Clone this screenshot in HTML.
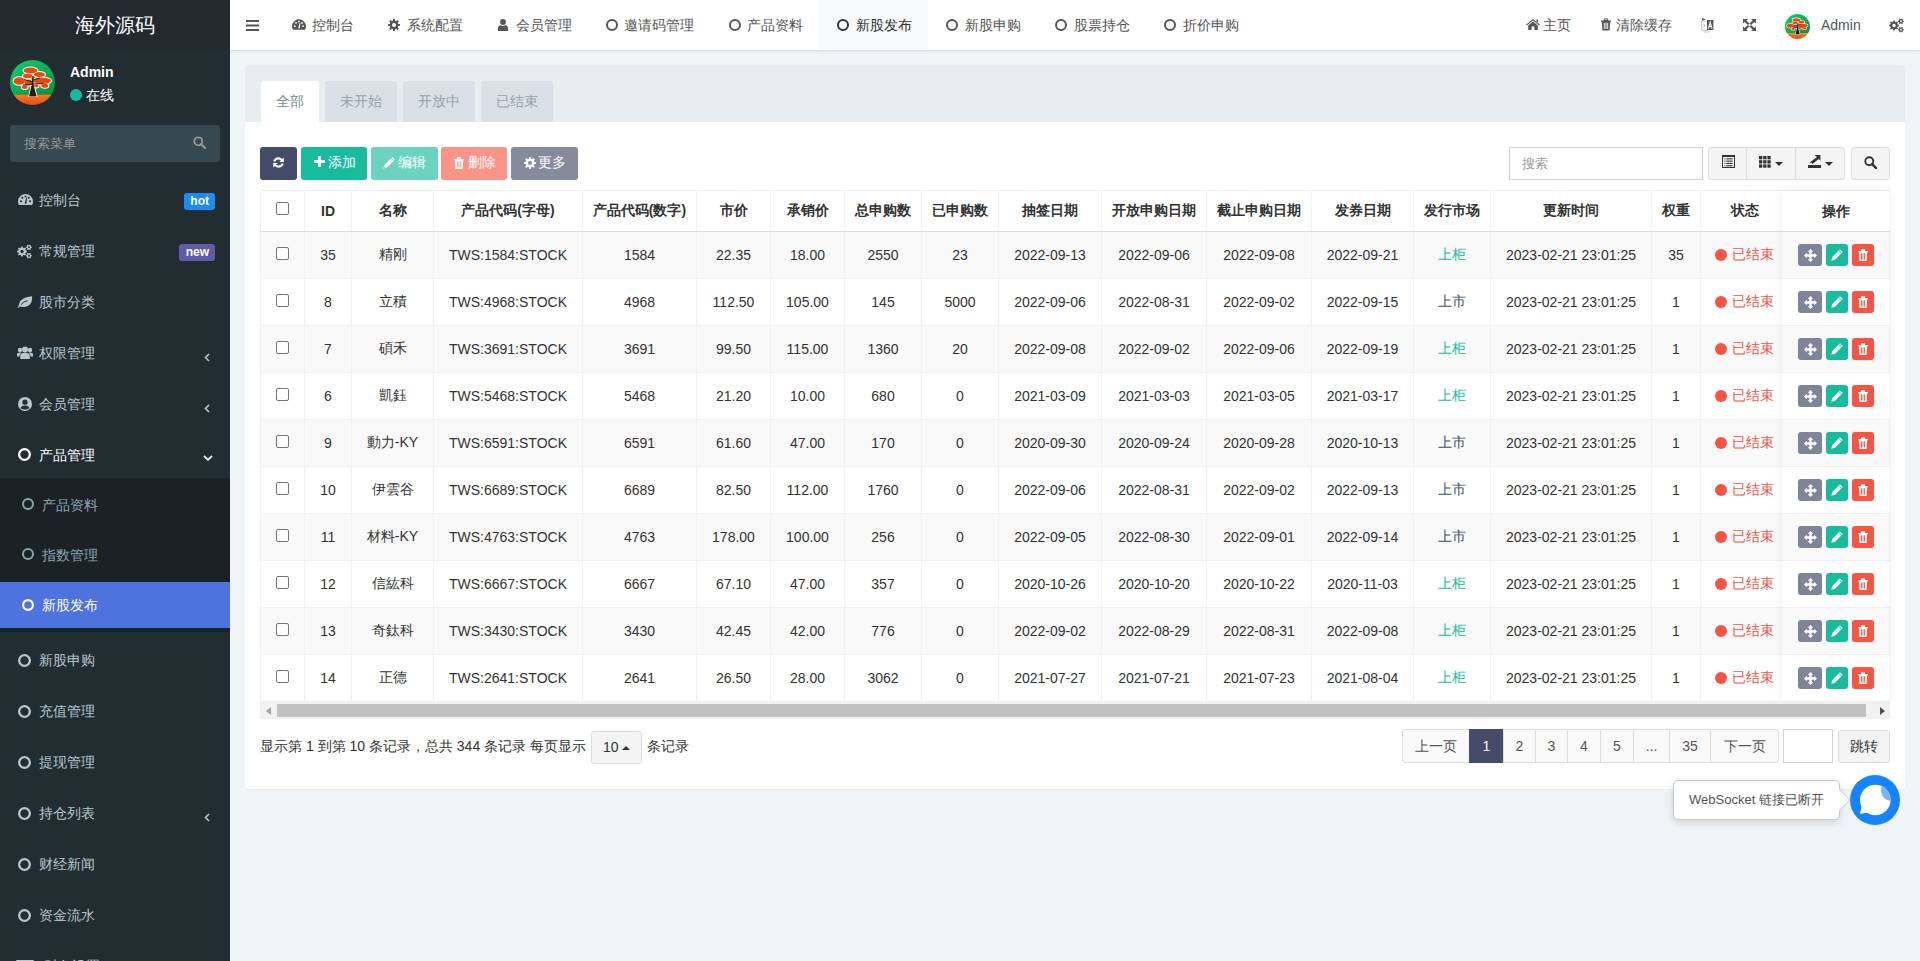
<!DOCTYPE html>
<html><head><meta charset="utf-8">
<style>
*{box-sizing:border-box}
html,body{margin:0;padding:0}
body{width:1920px;height:961px;overflow:hidden;position:relative;background:#f1f4f6;font-family:"Liberation Sans",sans-serif;font-size:14px;color:#333}
.abs{position:absolute}
svg{display:block}
/* sidebar */
#side{position:absolute;left:0;top:0;width:230px;height:961px;background:#222d32;overflow:hidden}
#logo{position:absolute;left:0;top:0;width:230px;height:50px;background:#222a30;color:#fff;font-size:20px;text-align:center;line-height:50px}
.avatar{position:absolute;left:10px;top:60px;width:45px;height:45px;border-radius:50%;overflow:hidden}
.uname{position:absolute;left:70px;top:63px;color:#fff;font-weight:bold;font-size:14px;line-height:18px}
.online{position:absolute;left:70px;top:86px;color:#fff;font-size:14px;line-height:18px}
.online i{display:inline-block;width:12px;height:12px;border-radius:50%;background:#18bc9c;vertical-align:-1px;margin-right:4px}
.sform{position:absolute;left:10px;top:125px;width:210px;height:37px;background:#374850;border-radius:3px}
.sform span{position:absolute;left:14px;top:10px;color:#999;font-size:13px;line-height:18px}
.sform svg{position:absolute;left:183px;top:11px}
.mi{position:absolute;left:0;width:230px;height:51px;color:#b8c7ce;font-size:14px}
.mi .ic{position:absolute;left:17px;top:19px}
.mi .tx{position:absolute;left:39px;top:16px;line-height:18px}
.mi .ang{position:absolute;left:204px;top:21px}
.badge{position:absolute;right:15px;top:18px;height:17px;line-height:17px;padding:0 6px;border-radius:3px;color:#fff;font-weight:bold;font-size:12px}
.sub{position:absolute;left:0;top:478px;width:230px;height:154px;background:#1a2226}
.si{position:absolute;left:0;width:230px;height:50px;color:#8aa4af}
.si .ic{position:absolute;left:22px;top:18px}
.si .tx{position:absolute;left:42px;top:16px;line-height:18px}
.si.act{background:#4e73df;color:#fff;height:46px}
/* header */
#hdr{position:absolute;left:230px;top:0;width:1690px;height:50px;background:#fff;box-shadow:0 1px 1px rgba(0,20,40,.05),0 1px 4px rgba(0,20,40,.07)}
.nt{position:absolute;top:0;height:50px;color:#555;font-size:14px}
.nt .ic{position:absolute;top:18px}
.nt .tx{position:absolute;top:16px;line-height:18px;white-space:nowrap}
/* content */
.panel{position:absolute;left:245px;top:65px;width:1660px;height:724px;background:#fff;border-radius:3px;box-shadow:0 1px 1px rgba(0,0,0,.03)}
.ph{position:absolute;left:0;top:0;width:1660px;height:57px;background:#e8edf0;border-radius:3px 3px 0 0}
.tab{position:absolute;top:16px;height:41px;background:#d9e0e6;color:#95a5a6;border-radius:3px 3px 0 0;line-height:18px;padding-top:11px;text-align:center}
.tab.act{background:#fff;color:#7b8a8b}
.btn{position:absolute;top:82px;height:33px;border-radius:3px;color:#fff;font-size:14px;line-height:18px}
.btn .ic{position:absolute;top:10px}
.btn .tx{position:absolute;top:6px;white-space:nowrap}
.srch{position:absolute;left:1264px;top:82px;width:194px;height:33px;border:1px solid #ccd5df;background:#fff}
.srch span{position:absolute;left:12px;top:7px;color:#999;line-height:18px;font-size:13px}
.bg{position:absolute;top:82px;height:33px;background:#f4f4f4;border:1px solid #ddd;border-radius:3px}
/* table */
.tbw{position:absolute;left:15px;top:125px;width:1630px;height:512px;overflow:hidden}
.tb{position:absolute;left:0;top:0;border-collapse:collapse;table-layout:fixed;width:1630px}
.tb th,.tb td{border:1px solid #f2f2f2;text-align:center;white-space:nowrap;overflow:hidden;padding:0;font-size:14px;color:#333}
.tb th{height:41px;font-weight:bold;border-bottom:1px solid #ddd;border-top:1px solid #eee}
.tb td{height:47px}
.tb td .cb{vertical-align:top;margin-top:0px}.tb th .cb{vertical-align:top;margin-top:-1px}
.tb tbody tr:nth-child(odd) td{background:#f9f9f9}
.cb{display:inline-block;width:13px;height:13px;border:1px solid #767676;border-radius:2px;background:#fff;vertical-align:middle}
.g{color:#18bc9c}.p{color:#444c69}
.st{color:#f75444}
.dot{display:inline-block;width:12px;height:12px;border-radius:50%;background:#f75444;vertical-align:-2px;margin-right:5px}
.fixcol{position:absolute;left:1537px;top:126px;width:107px;height:511px;background:#fff;box-shadow:0 0 10px rgba(0,0,0,.07)}
.fh{height:41px;line-height:40px;text-align:center;font-weight:bold;border-bottom:1px solid #ddd}
.fr{height:47px;position:relative;border-bottom:1px solid #f0f0f0;background:#fff}
.fr.odd{background:#f9f9f9}
.ob{position:absolute;top:12px;height:22px;border-radius:3px;display:flex;align-items:center;justify-content:center}
.ob.drag{left:16px;width:24px;background:#7f8599}
.ob.ed{left:44px;width:22px;background:#18bc9c}
.ob.del{left:70px;width:22px;background:#f75444}
.scroll{position:absolute;left:15px;top:637px;width:1630px;height:17px;background:#f1f1f1}
.thumb{position:absolute;left:17px;top:2px;width:1589px;height:13px;background:#c1c1c1}
.pinfo{position:absolute;left:15px;top:672px;line-height:18px;color:#333;white-space:nowrap}
.psel{position:absolute;left:346px;top:666px;width:51px;height:33px;background:#f4f4f4;border:1px solid #ddd;border-radius:3px}
.pg{position:absolute;top:664px;height:34px;border:1px solid #ddd;margin-left:-1px;background:#f9f9f9;color:#555;text-align:center;line-height:32px}
.pg.act{background:#444c69;color:#fff;border-color:#444c69}
</style></head><body>

<div id="side">
  <div id="logo">海外源码</div>
  <div class="avatar"><svg width="45" height="45" viewBox="0 0 45 45"><defs><linearGradient id="ga45" x1="0" y1="0" x2="1" y2="1"><stop offset="0" stop-color="#0fcf74"/><stop offset="1" stop-color="#099040"/></linearGradient>
<linearGradient id="gb45" x1="0" y1="0" x2="0" y2="1"><stop offset="0" stop-color="#f78019"/><stop offset="1" stop-color="#e4481c"/></linearGradient></defs>
<rect x="0" y="0" width="45" height="34.5" fill="url(#ga45)"/><rect x="0" y="34.5" width="45" height="10.5" fill="url(#gb45)"/><ellipse cx="20.5" cy="10.5" rx="8" ry="4" fill="#fff"/><ellipse cx="29.5" cy="14.5" rx="6.5" ry="3.4" fill="#fff"/><ellipse cx="17.7" cy="15.9" rx="5.7" ry="3.2" fill="#fff"/><ellipse cx="32" cy="20.8" rx="10" ry="4.4" fill="#fff"/><ellipse cx="9.3" cy="21" rx="6.7" ry="4.8" fill="#fff"/><ellipse cx="18.5" cy="22.6" rx="4.9" ry="4.1" fill="#fff"/><ellipse cx="14.8" cy="27" rx="3.9" ry="2.9" fill="#fff"/><ellipse cx="26.3" cy="25.8" rx="3.3" ry="2.6" fill="#fff"/><ellipse cx="34.8" cy="25.8" rx="4.6" ry="3" fill="#fff"/><path d="M18.2 37 L21 24 L24.6 24 L27.4 37 Z" fill="#fff"/><ellipse cx="20.5" cy="10.5" rx="7" ry="3" fill="#e9490f"/><ellipse cx="29.5" cy="14.5" rx="5.5" ry="2.4" fill="#e9490f"/><ellipse cx="17.7" cy="15.9" rx="4.7" ry="2.2" fill="#e9490f"/><ellipse cx="32" cy="20.8" rx="9" ry="3.4" fill="#e9490f"/><ellipse cx="9.3" cy="21" rx="5.7" ry="3.8" fill="#e9490f"/><ellipse cx="18.5" cy="22.6" rx="3.9" ry="3.1" fill="#e9490f"/><ellipse cx="14.8" cy="27" rx="2.9" ry="1.9" fill="#e9490f"/><ellipse cx="26.3" cy="25.8" rx="2.3" ry="1.6" fill="#e9490f"/><ellipse cx="34.8" cy="25.8" rx="3.6" ry="2" fill="#e9490f"/><path d="M19 36.5 L21.6 25 L22.4 16 L23.4 16 L23.6 25 L26.6 36.5 Z" fill="#2b1816"/><path d="M22.6 22 L14 19.5 M22.6 20 L30 18 M22.6 24 L33 23.6 M22.6 24 L13 25" stroke="#2b1816" stroke-width="0.9"/></svg></div>
  <div class="uname">Admin</div>
  <div class="online"><i></i>在线</div>
  <div class="sform"><span>搜索菜单</span>
    <svg width="13" height="13" viewBox="0 0 13 13"><circle cx="5.3" cy="5.3" r="4" fill="none" stroke="#999" stroke-width="1.8"/><path d="M8.2 8.2 L12 12" stroke="#999" stroke-width="2.2" stroke-linecap="round"/></svg>
  </div>

  <div class="mi" style="top:175px"><span class="ic" style="left:18px;top:19px"><svg width="15" height="11" viewBox="0 0 15 11"><path fill="#b8c7ce" d="M7.5 0 A7.5 7.5 0 0 1 15 7.5 Q15 9.6 14 11 H1 Q0 9.6 0 7.5 A7.5 7.5 0 0 1 7.5 0 Z"/>
<circle cx="3" cy="7.3" r="1" fill="#222d32"/><circle cx="12" cy="7.3" r="1" fill="#222d32"/><circle cx="4.3" cy="3.8" r="1" fill="#222d32"/><circle cx="7.5" cy="2.4" r="1" fill="#222d32"/><circle cx="10.7" cy="3.8" r="1" fill="#222d32"/>
<path d="M6.6 9.5 L8.3 3.6 L9 3.8 L8.4 9.7 Z" fill="#222d32"/></svg></span><span class="tx">控制台</span><span class="badge" style="background:#1d8cf2;right:15px">hot</span></div><div class="mi" style="top:226px"><span class="ic" style="left:17px;top:18px"><svg width="15" height="15" viewBox="0 0 15.5 15"><path fill-rule="evenodd" fill="#b8c7ce" d="M8.97 6.50 L10.33 6.65 L10.33 8.35 L8.97 8.50 L8.57 9.46 L9.43 10.52 L8.22 11.73 L7.16 10.87 L6.20 11.27 L6.05 12.63 L4.35 12.63 L4.20 11.27 L3.24 10.87 L2.18 11.73 L0.97 10.52 L1.83 9.46 L1.43 8.50 L0.07 8.35 L0.07 6.65 L1.43 6.50 L1.83 5.54 L0.97 4.48 L2.18 3.27 L3.24 4.13 L4.20 3.73 L4.35 2.37 L6.05 2.37 L6.20 3.73 L7.16 4.13 L8.22 3.27 L9.43 4.48 L8.57 5.54 Z M3.50 7.50 a1.7 1.7 0 1 0 3.40 0 a1.7 1.7 0 1 0 -3.40 0 Z M14.37 2.45 L15.23 2.55 L15.23 3.85 L14.37 3.95 L13.98 4.62 L14.33 5.41 L13.20 6.06 L12.69 5.37 L11.91 5.37 L11.40 6.06 L10.27 5.41 L10.62 4.62 L10.23 3.95 L9.37 3.85 L9.37 2.55 L10.23 2.45 L10.62 1.78 L10.27 0.99 L11.40 0.34 L11.91 1.03 L12.69 1.03 L13.20 0.34 L14.33 0.99 L13.98 1.78 Z M11.30 3.20 a1.0 1.0 0 1 0 2.00 0 a1.0 1.0 0 1 0 -2.00 0 Z M14.37 11.05 L15.23 11.15 L15.23 12.45 L14.37 12.55 L13.98 13.22 L14.33 14.01 L13.20 14.66 L12.69 13.97 L11.91 13.97 L11.40 14.66 L10.27 14.01 L10.62 13.22 L10.23 12.55 L9.37 12.45 L9.37 11.15 L10.23 11.05 L10.62 10.38 L10.27 9.59 L11.40 8.94 L11.91 9.63 L12.69 9.63 L13.20 8.94 L14.33 9.59 L13.98 10.38 Z M11.30 11.80 a1.0 1.0 0 1 0 2.00 0 a1.0 1.0 0 1 0 -2.00 0 Z"/></svg></span><span class="tx">常规管理</span><span class="badge" style="background:#605ca8;padding-left:7px">new</span></div><div class="mi" style="top:277px"><span class="ic" style="left:17px;top:19px"><svg width="16" height="12" viewBox="0 0 16 12"><path fill="#b8c7ce" d="M0.3 11.3 C1.3 10.5 1.9 9.6 2.1 8.4 C2.5 3.6 7.2 1.4 15 0.3 C15.6 4.8 14.2 10.2 7.4 11 C5.4 11.2 3.6 10.8 2.8 10.6 C2.2 11.1 1.6 11.6 1 11.9 Z"/><path d="M4 8.6 Q6.5 5.4 10.6 4.6" fill="none" stroke="#222d32" stroke-width="1"/></svg></span><span class="tx">股市分类</span></div><div class="mi" style="top:328px"><span class="ic" style="left:17px;top:18px"><svg width="16" height="13" viewBox="0 0 16 13"><circle cx="8" cy="3.4" r="3" fill="#b8c7ce"/><circle cx="3" cy="4" r="2.2" fill="#b8c7ce"/><circle cx="13" cy="4" r="2.2" fill="#b8c7ce"/>
<path fill="#b8c7ce" d="M3.2 13 V10 Q3.2 6.8 8 6.8 Q12.8 6.8 12.8 10 V13 Z"/><path fill="#b8c7ce" d="M0 10.5 V8.5 Q0 6.6 3 6.6 Q3.8 6.6 4.4 6.8 Q2.4 7.8 2.4 10.5 Z"/><path fill="#b8c7ce" d="M16 10.5 V8.5 Q16 6.6 13 6.6 Q12.2 6.6 11.6 6.8 Q13.6 7.8 13.6 10.5 Z"/></svg></span><span class="tx">权限管理</span><span class="ang" style="top:25px"><svg width="6" height="9" viewBox="0 0 6 9"><path d="M5 1 L1.5 4.5 L5 8" fill="none" stroke="#b8c7ce" stroke-width="1.6"/></svg></span></div><div class="mi" style="top:379px"><span class="ic" style="left:18px;top:18px"><svg width="14" height="14" viewBox="0 0 14 14"><circle cx="7" cy="7" r="7" fill="#b8c7ce"/><circle cx="7" cy="5.2" r="2.6" fill="#222d32"/><path d="M2.6 11.2 Q3.4 8.6 7 8.6 Q10.6 8.6 11.4 11.2 Q9.6 12.6 7 12.6 Q4.4 12.6 2.6 11.2 Z" fill="#222d32"/></svg></span><span class="tx">会员管理</span><span class="ang" style="top:25px"><svg width="6" height="9" viewBox="0 0 6 9"><path d="M5 1 L1.5 4.5 L5 8" fill="none" stroke="#b8c7ce" stroke-width="1.6"/></svg></span></div><div class="mi" style="top:430px;color:#fff"><span class="ic" style="left:18px;top:18px"><svg width="13" height="13" viewBox="0 0 13 13"><circle cx="6.5" cy="6.5" r="5.35" fill="none" stroke="#fff" stroke-width="2.3"/></svg></span><span class="tx">产品管理</span><span class="ang" style="left:203px;top:25px"><svg width="10" height="6" viewBox="0 0 10 6"><path d="M1 1 L5 4.8 L9 1" fill="none" stroke="#fff" stroke-width="1.8"/></svg></span></div><div class="sub"></div><div class="si" style="top:480px"><span class="ic"><svg width="12" height="12" viewBox="0 0 12 12"><circle cx="6.0" cy="6.0" r="5.0" fill="none" stroke="#8aa4af" stroke-width="2"/></svg></span><span class="tx">产品资料</span></div><div class="si" style="top:530px"><span class="ic"><svg width="12" height="12" viewBox="0 0 12 12"><circle cx="6.0" cy="6.0" r="5.0" fill="none" stroke="#8aa4af" stroke-width="2"/></svg></span><span class="tx">指数管理</span></div><div class="si act" style="top:582px"><span class="ic" style="top:17px"><svg width="12" height="12" viewBox="0 0 12 12"><circle cx="6.0" cy="6.0" r="4.9" fill="none" stroke="#fff" stroke-width="2.2"/></svg></span><span class="tx" style="top:14px">新股发布</span></div><div class="mi" style="top:635px"><span class="ic" style="left:18px;top:19px"><svg width="13" height="13" viewBox="0 0 13 13"><circle cx="6.5" cy="6.5" r="5.35" fill="none" stroke="#b8c7ce" stroke-width="2.3"/></svg></span><span class="tx">新股申购</span></div><div class="mi" style="top:686px"><span class="ic" style="left:18px;top:19px"><svg width="13" height="13" viewBox="0 0 13 13"><circle cx="6.5" cy="6.5" r="5.35" fill="none" stroke="#b8c7ce" stroke-width="2.3"/></svg></span><span class="tx">充值管理</span></div><div class="mi" style="top:737px"><span class="ic" style="left:18px;top:19px"><svg width="13" height="13" viewBox="0 0 13 13"><circle cx="6.5" cy="6.5" r="5.35" fill="none" stroke="#b8c7ce" stroke-width="2.3"/></svg></span><span class="tx">提现管理</span></div><div class="mi" style="top:788px"><span class="ic" style="left:18px;top:19px"><svg width="13" height="13" viewBox="0 0 13 13"><circle cx="6.5" cy="6.5" r="5.35" fill="none" stroke="#b8c7ce" stroke-width="2.3"/></svg></span><span class="tx">持仓列表</span><span class="ang" style="top:25px"><svg width="6" height="9" viewBox="0 0 6 9"><path d="M5 1 L1.5 4.5 L5 8" fill="none" stroke="#b8c7ce" stroke-width="1.6"/></svg></span></div><div class="mi" style="top:839px"><span class="ic" style="left:18px;top:19px"><svg width="13" height="13" viewBox="0 0 13 13"><circle cx="6.5" cy="6.5" r="5.35" fill="none" stroke="#b8c7ce" stroke-width="2.3"/></svg></span><span class="tx">财经新闻</span></div><div class="mi" style="top:890px"><span class="ic" style="left:18px;top:19px"><svg width="13" height="13" viewBox="0 0 13 13"><circle cx="6.5" cy="6.5" r="5.35" fill="none" stroke="#b8c7ce" stroke-width="2.3"/></svg></span><span class="tx">资金流水</span></div><div class="mi" style="top:941px"><span class="abs" style="left:16px;top:19px;width:18px;height:14px;border:2px solid #b8c7ce;border-radius:1px"></span><span class="tx" style="left:44px">财务设置</span></div>
</div>

<div id="hdr">
  <span class="abs" style="left:16px;top:20px"><svg width="13" height="11" viewBox="0 0 13 11"><rect y="0" width="13" height="2" fill="#555"/><rect y="4.5" width="13" height="2" fill="#555"/><rect y="9" width="13" height="2" fill="#555"/></svg></span><div class="abs" style="left:589px;top:0;width:109px;height:50px;background:#f8f9fa"></div><span class="abs" style="left:62px;top:19px"><svg width="14" height="11" viewBox="0 0 15 11"><path fill="#555" d="M7.5 0 A7.5 7.5 0 0 1 15 7.5 Q15 9.6 14 11 H1 Q0 9.6 0 7.5 A7.5 7.5 0 0 1 7.5 0 Z"/>
<circle cx="3" cy="7.3" r="1" fill="#fff"/><circle cx="12" cy="7.3" r="1" fill="#fff"/><circle cx="4.3" cy="3.8" r="1" fill="#fff"/><circle cx="7.5" cy="2.4" r="1" fill="#fff"/><circle cx="10.7" cy="3.8" r="1" fill="#fff"/>
<path d="M6.6 9.5 L8.3 3.6 L9 3.8 L8.4 9.7 Z" fill="#fff"/></svg></span><span class="nt"><span class="tx" style="left:82px;">控制台</span></span><span class="abs" style="left:158px;top:19px"><svg width="12" height="12" viewBox="0 0 12 12"><path fill-rule="evenodd" fill="#555" d="M10.18 4.89 L11.92 5.01 L11.92 6.99 L10.18 7.11 L9.74 8.17 L10.88 9.49 L9.49 10.88 L8.17 9.74 L7.11 10.18 L6.99 11.92 L5.01 11.92 L4.89 10.18 L3.83 9.74 L2.51 10.88 L1.12 9.49 L2.26 8.17 L1.82 7.11 L0.08 6.99 L0.08 5.01 L1.82 4.89 L2.26 3.83 L1.12 2.51 L2.51 1.12 L3.83 2.26 L4.89 1.82 L5.01 0.08 L6.99 0.08 L7.11 1.82 L8.17 2.26 L9.49 1.12 L10.88 2.51 L9.74 3.83 Z M4.02 6.00 a1.98 1.98 0 1 0 3.96 0 a1.98 1.98 0 1 0 -3.96 0 Z"/></svg></span><span class="nt"><span class="tx" style="left:177px;">系统配置</span></span><span class="abs" style="left:268px;top:19px"><svg width="10" height="12" viewBox="0 0 10 12"><ellipse cx="5" cy="3" rx="2.9" ry="3" fill="#555"/><path d="M0 12 V9.4 Q0 6.6 2.6 6.3 Q5 7.6 7.4 6.3 Q10 6.6 10 9.4 V12 Z" fill="#555"/></svg></span><span class="nt"><span class="tx" style="left:286px;">会员管理</span></span><span class="abs" style="left:376px;top:19px"><svg width="12" height="12" viewBox="0 0 12 12"><circle cx="6.0" cy="6.0" r="5.0" fill="none" stroke="#555" stroke-width="2"/></svg></span><span class="nt"><span class="tx" style="left:394px;">邀请码管理</span></span><span class="abs" style="left:499px;top:19px"><svg width="12" height="12" viewBox="0 0 12 12"><circle cx="6.0" cy="6.0" r="5.0" fill="none" stroke="#555" stroke-width="2"/></svg></span><span class="nt"><span class="tx" style="left:517px;">产品资料</span></span><span class="abs" style="left:607px;top:19px"><svg width="12" height="12" viewBox="0 0 12 12"><circle cx="6.0" cy="6.0" r="5.0" fill="none" stroke="#333" stroke-width="2"/></svg></span><span class="nt"><span class="tx" style="left:626px;color:#333">新股发布</span></span><span class="abs" style="left:716px;top:19px"><svg width="12" height="12" viewBox="0 0 12 12"><circle cx="6.0" cy="6.0" r="5.0" fill="none" stroke="#555" stroke-width="2"/></svg></span><span class="nt"><span class="tx" style="left:735px;">新股申购</span></span><span class="abs" style="left:825px;top:19px"><svg width="12" height="12" viewBox="0 0 12 12"><circle cx="6.0" cy="6.0" r="5.0" fill="none" stroke="#555" stroke-width="2"/></svg></span><span class="nt"><span class="tx" style="left:844px;">股票持仓</span></span><span class="abs" style="left:934px;top:19px"><svg width="12" height="12" viewBox="0 0 12 12"><circle cx="6.0" cy="6.0" r="5.0" fill="none" stroke="#555" stroke-width="2"/></svg></span><span class="nt"><span class="tx" style="left:953px;">折价申购</span></span><span class="abs" style="left:1296px;top:19px"><svg width="14" height="11" viewBox="0 0 14 11"><path fill="#555" d="M7 0 L14 5.8 L13.2 6.6 L7 1.6 L0.8 6.6 L0 5.8 Z M10.5 0.6 H12 V3.6 L10.5 2.4 Z M2.2 6.4 L7 2.6 L11.8 6.4 V11 H8.4 V7.6 H5.6 V11 H2.2 Z"/></svg></span><span class="nt"><span class="tx" style="left:1313px">主页</span></span><span class="abs" style="left:1371px;top:18px"><svg width="10" height="13" viewBox="0 0 11 13"><path fill="#555" d="M0 2 H11 V3.4 H10.1 L9.5 13 H1.5 L0.9 3.4 H0 Z M3.5 0 H7.5 L8.1 2 H2.9 Z"/><path fill="#fff" d="M3.1 4.6 H4.1 V11.4 H3.1 Z M5 4.6 H6 V11.4 H5 Z M6.9 4.6 H7.9 V11.4 H6.9 Z M4.2 1 H6.8 L7 1.6 H4 Z"/></svg></span><span class="nt"><span class="tx" style="left:1386px">清除缓存</span></span><span class="abs" style="left:1471px;top:18px"><svg width="14" height="15" viewBox="0 0 14 15"><path d="M0.6 3 H6.6 V12.6 H0.6 Z" fill="#fff" stroke="#bbb" stroke-width="0.9"/><path d="M1 0 L5 1.6 L1 2.4 Z" fill="#555"/><path d="M6 2 H12.4 V12 H6 Z" fill="#555"/><path d="M7.4 10.6 L9.2 4 L11 10.6 M8 8.4 H10.4" stroke="#fff" stroke-width="1.1" fill="none"/><path d="M2.2 6.2 L4.4 7.6 L2.2 9" stroke="#aab" stroke-width="0.8" fill="none"/><path d="M3 14 H8 L9.5 12.6" stroke="#bbb" stroke-width="0.8" fill="none"/></svg></span><span class="abs" style="left:1513px;top:19px"><svg width="13" height="12" viewBox="0 0 13 13" preserveAspectRatio="none"><path fill="#555" d="M0 0 H5 L3.3 1.7 L6.5 4.9 L4.9 6.5 L1.7 3.3 L0 5 Z M13 0 V5 L11.3 3.3 L8.1 6.5 L6.5 4.9 L9.7 1.7 L8 0 Z M0 13 V8 L1.7 9.7 L4.9 6.5 L6.5 8.1 L3.3 11.3 L5 13 Z M13 13 H8 L9.7 11.3 L6.5 8.1 L8.1 6.5 L11.3 9.7 L13 8 Z"/></svg></span><span class="abs" style="left:1555px;top:14px;width:25px;height:25px;border-radius:50%;overflow:hidden"><svg width="25" height="25" viewBox="0 0 45 45"><defs><linearGradient id="ga25" x1="0" y1="0" x2="1" y2="1"><stop offset="0" stop-color="#0fcf74"/><stop offset="1" stop-color="#099040"/></linearGradient>
<linearGradient id="gb25" x1="0" y1="0" x2="0" y2="1"><stop offset="0" stop-color="#f78019"/><stop offset="1" stop-color="#e4481c"/></linearGradient></defs>
<rect x="0" y="0" width="45" height="34.5" fill="url(#ga25)"/><rect x="0" y="34.5" width="45" height="10.5" fill="url(#gb25)"/><ellipse cx="20.5" cy="10.5" rx="8" ry="4" fill="#fff"/><ellipse cx="29.5" cy="14.5" rx="6.5" ry="3.4" fill="#fff"/><ellipse cx="17.7" cy="15.9" rx="5.7" ry="3.2" fill="#fff"/><ellipse cx="32" cy="20.8" rx="10" ry="4.4" fill="#fff"/><ellipse cx="9.3" cy="21" rx="6.7" ry="4.8" fill="#fff"/><ellipse cx="18.5" cy="22.6" rx="4.9" ry="4.1" fill="#fff"/><ellipse cx="14.8" cy="27" rx="3.9" ry="2.9" fill="#fff"/><ellipse cx="26.3" cy="25.8" rx="3.3" ry="2.6" fill="#fff"/><ellipse cx="34.8" cy="25.8" rx="4.6" ry="3" fill="#fff"/><path d="M18.2 37 L21 24 L24.6 24 L27.4 37 Z" fill="#fff"/><ellipse cx="20.5" cy="10.5" rx="7" ry="3" fill="#e9490f"/><ellipse cx="29.5" cy="14.5" rx="5.5" ry="2.4" fill="#e9490f"/><ellipse cx="17.7" cy="15.9" rx="4.7" ry="2.2" fill="#e9490f"/><ellipse cx="32" cy="20.8" rx="9" ry="3.4" fill="#e9490f"/><ellipse cx="9.3" cy="21" rx="5.7" ry="3.8" fill="#e9490f"/><ellipse cx="18.5" cy="22.6" rx="3.9" ry="3.1" fill="#e9490f"/><ellipse cx="14.8" cy="27" rx="2.9" ry="1.9" fill="#e9490f"/><ellipse cx="26.3" cy="25.8" rx="2.3" ry="1.6" fill="#e9490f"/><ellipse cx="34.8" cy="25.8" rx="3.6" ry="2" fill="#e9490f"/><path d="M19 36.5 L21.6 25 L22.4 16 L23.4 16 L23.6 25 L26.6 36.5 Z" fill="#2b1816"/><path d="M22.6 22 L14 19.5 M22.6 20 L30 18 M22.6 24 L33 23.6 M22.6 24 L13 25" stroke="#2b1816" stroke-width="0.9"/></svg></span><span class="nt"><span class="tx" style="left:1591px;font-size:14px">Admin</span></span><span class="abs" style="left:1659px;top:18px"><svg width="15" height="15" viewBox="0 0 15.5 15"><path fill-rule="evenodd" fill="#555" d="M8.97 6.50 L10.33 6.65 L10.33 8.35 L8.97 8.50 L8.57 9.46 L9.43 10.52 L8.22 11.73 L7.16 10.87 L6.20 11.27 L6.05 12.63 L4.35 12.63 L4.20 11.27 L3.24 10.87 L2.18 11.73 L0.97 10.52 L1.83 9.46 L1.43 8.50 L0.07 8.35 L0.07 6.65 L1.43 6.50 L1.83 5.54 L0.97 4.48 L2.18 3.27 L3.24 4.13 L4.20 3.73 L4.35 2.37 L6.05 2.37 L6.20 3.73 L7.16 4.13 L8.22 3.27 L9.43 4.48 L8.57 5.54 Z M3.50 7.50 a1.7 1.7 0 1 0 3.40 0 a1.7 1.7 0 1 0 -3.40 0 Z M14.37 2.45 L15.23 2.55 L15.23 3.85 L14.37 3.95 L13.98 4.62 L14.33 5.41 L13.20 6.06 L12.69 5.37 L11.91 5.37 L11.40 6.06 L10.27 5.41 L10.62 4.62 L10.23 3.95 L9.37 3.85 L9.37 2.55 L10.23 2.45 L10.62 1.78 L10.27 0.99 L11.40 0.34 L11.91 1.03 L12.69 1.03 L13.20 0.34 L14.33 0.99 L13.98 1.78 Z M11.30 3.20 a1.0 1.0 0 1 0 2.00 0 a1.0 1.0 0 1 0 -2.00 0 Z M14.37 11.05 L15.23 11.15 L15.23 12.45 L14.37 12.55 L13.98 13.22 L14.33 14.01 L13.20 14.66 L12.69 13.97 L11.91 13.97 L11.40 14.66 L10.27 14.01 L10.62 13.22 L10.23 12.55 L9.37 12.45 L9.37 11.15 L10.23 11.05 L10.62 10.38 L10.27 9.59 L11.40 8.94 L11.91 9.63 L12.69 9.63 L13.20 8.94 L14.33 9.59 L13.98 10.38 Z M11.30 11.80 a1.0 1.0 0 1 0 2.00 0 a1.0 1.0 0 1 0 -2.00 0 Z"/></svg></span>
</div>

<div class="panel">
  <div class="ph">
    <div class="tab act" style="left:16px;width:58px">全部</div>
    <div class="tab" style="left:80px;width:72px">未开始</div>
    <div class="tab" style="left:158px;width:72px">开放中</div>
    <div class="tab" style="left:236px;width:72px">已结束</div>
  </div>
  <div class="btn" style="left:15px;width:37px;background:#444c69"><span class="ic" style="left:12px;top:9px"><svg width="13" height="13" viewBox="0 0 13 13"><path fill="#fff" d="M1.3 5.4 Q2 1.6 6.4 1.3 Q8.8 1.3 10.4 2.9 L11.8 1.5 V6 H7.3 L8.9 4.4 Q7.9 3.4 6.4 3.4 Q4 3.6 3.5 5.4 Z M11.7 7.6 Q11 11.4 6.6 11.7 Q4.2 11.7 2.6 10.1 L1.2 11.5 V7 H5.7 L4.1 8.6 Q5.1 9.6 6.6 9.6 Q9 9.4 9.5 7.6 Z"/></svg></span></div><div class="btn" style="left:56px;width:66px;background:#18bc9c"><span class="ic" style="left:13px;top:9px"><svg width="11" height="11" viewBox="0 0 11 11"><path fill="#fff" d="M4 0 H7 V4 H11 V7 H7 V11 H4 V7 H0 V4 H4 Z"/></svg></span><span class="tx" style="left:27px">添加</span></div><div class="btn" style="left:126px;width:67px;background:#6dd3bf"><span class="ic" style="left:12px;top:10px"><svg width="12" height="12" viewBox="0 0 12 12"><path fill="#fff" d="M9.3 0.2 L11.8 2.7 L4.2 10.3 L0.2 11.8 L1.7 7.8 Z"/><path fill="#6dd3bf" d="M8 1.5 L10.5 4 L10.9 3.6 L8.4 1.1 Z M1.4 9.6 L2.4 10.6 L1.2 11 L1 10.8 Z"/></svg></span><span class="tx" style="left:27px">编辑</span></div><div class="btn" style="left:196px;width:66px;background:#fa9388"><span class="ic" style="left:13px;top:10px"><svg width="10" height="12" viewBox="0 0 11 13"><path fill="#fff" d="M0 2 H11 V3.4 H10.1 L9.5 13 H1.5 L0.9 3.4 H0 Z M3.5 0 H7.5 L8.1 2 H2.9 Z"/><path fill="#fa9388" d="M3.1 4.6 H4.1 V11.4 H3.1 Z M5 4.6 H6 V11.4 H5 Z M6.9 4.6 H7.9 V11.4 H6.9 Z M4.2 1 H6.8 L7 1.6 H4 Z"/></svg></span><span class="tx" style="left:27px">删除</span></div><div class="btn" style="left:266px;width:67px;background:#858a9d"><span class="ic" style="left:13px;top:10px"><svg width="12" height="12" viewBox="0 0 12 12"><path fill-rule="evenodd" fill="#fff" d="M10.18 4.89 L11.92 5.01 L11.92 6.99 L10.18 7.11 L9.74 8.17 L10.88 9.49 L9.49 10.88 L8.17 9.74 L7.11 10.18 L6.99 11.92 L5.01 11.92 L4.89 10.18 L3.83 9.74 L2.51 10.88 L1.12 9.49 L2.26 8.17 L1.82 7.11 L0.08 6.99 L0.08 5.01 L1.82 4.89 L2.26 3.83 L1.12 2.51 L2.51 1.12 L3.83 2.26 L4.89 1.82 L5.01 0.08 L6.99 0.08 L7.11 1.82 L8.17 2.26 L9.49 1.12 L10.88 2.51 L9.74 3.83 Z M4.02 6.00 a1.98 1.98 0 1 0 3.96 0 a1.98 1.98 0 1 0 -3.96 0 Z"/></svg></span><span class="tx" style="left:27px">更多</span></div><div class="srch"><span>搜索</span></div><div class="bg" style="left:1463px;width:137px"><span class="abs" style="left:37px;top:0;width:1px;height:31px;background:#ddd"></span><span class="abs" style="left:86px;top:0;width:1px;height:31px;background:#ddd"></span><span class="abs" style="left:13px;top:7px"><svg width="13" height="13" viewBox="0 0 13 13"><rect x="0.5" y="0.5" width="12" height="12" fill="none" stroke="#333" stroke-width="1"/><rect x="0" y="0" width="13" height="2" fill="#333"/><rect x="2.4" y="3.3" width="1" height="1.1" fill="#333"/><rect x="4.2" y="3.3" width="6.4" height="1.1" fill="#333"/><rect x="2.4" y="5.6" width="1" height="1.1" fill="#333"/><rect x="4.2" y="5.6" width="6.4" height="1.1" fill="#333"/><rect x="2.4" y="7.8999999999999995" width="1" height="1.1" fill="#333"/><rect x="4.2" y="7.8999999999999995" width="6.4" height="1.1" fill="#333"/><rect x="2.4" y="10.2" width="1" height="1.1" fill="#333"/><rect x="4.2" y="10.2" width="6.4" height="1.1" fill="#333"/></svg></span><span class="abs" style="left:50px;top:8px"><svg width="12" height="12" viewBox="0 0 12 12"><rect x="0.0" y="0.0" width="3.3" height="3.3" fill="#333"/><rect x="0.0" y="4.2" width="3.3" height="3.3" fill="#333"/><rect x="0.0" y="8.4" width="3.3" height="3.3" fill="#333"/><rect x="4.2" y="0.0" width="3.3" height="3.3" fill="#333"/><rect x="4.2" y="4.2" width="3.3" height="3.3" fill="#333"/><rect x="4.2" y="8.4" width="3.3" height="3.3" fill="#333"/><rect x="8.4" y="0.0" width="3.3" height="3.3" fill="#333"/><rect x="8.4" y="4.2" width="3.3" height="3.3" fill="#333"/><rect x="8.4" y="8.4" width="3.3" height="3.3" fill="#333"/></svg></span><span class="abs" style="left:66px;top:14px"><svg width="8" height="4" viewBox="0 0 8 4"><path d="M0 0 H8 L4 4 Z" fill="#333"/></svg></span><span class="abs" style="left:99px;top:7px"><svg width="14" height="13" viewBox="0 0 14 13"><rect x="0" y="10" width="13" height="3" fill="#333"/><path fill="#333" d="M6.6 0 H12.4 V5.8 L10.6 4 L4.6 9 L3 7.6 L2.4 8.6 L2 7.2 L3.4 6.2 L9 2 Z"/></svg></span><span class="abs" style="left:116px;top:14px"><svg width="8" height="4" viewBox="0 0 8 4"><path d="M0 0 H8 L4 4 Z" fill="#333"/></svg></span></div><div class="bg" style="left:1606px;width:39px"><span class="abs" style="left:12px;top:8px"><svg width="13" height="13" viewBox="0 0 14 14"><circle cx="5.7" cy="5.7" r="4.3" fill="none" stroke="#333" stroke-width="2"/><path d="M8.8 8.8 L13 13" stroke="#333" stroke-width="2.6" stroke-linecap="round"/></svg></span></div>
  <div class="tbw">
    <table class="tb"><colgroup><col style="width:44px"><col style="width:47px"><col style="width:82px"><col style="width:149px"><col style="width:114px"><col style="width:74px"><col style="width:74px"><col style="width:77px"><col style="width:77px"><col style="width:103px"><col style="width:105px"><col style="width:105px"><col style="width:102px"><col style="width:77px"><col style="width:161px"><col style="width:49px"><col style="width:88px"><col style="width:108px"></colgroup><thead><tr><th><span class="cb"></span></th><th>ID</th><th>名称</th><th>产品代码(字母)</th><th>产品代码(数字)</th><th>市价</th><th>承销价</th><th>总申购数</th><th>已申购数</th><th>抽签日期</th><th>开放申购日期</th><th>截止申购日期</th><th>发券日期</th><th>发行市场</th><th>更新时间</th><th>权重</th><th>状态</th><th>操作</th></tr></thead><tbody><tr><td><span class="cb"></span></td><td>35</td><td>精刚</td><td>TWS:1584:STOCK</td><td>1584</td><td>22.35</td><td>18.00</td><td>2550</td><td>23</td><td>2022-09-13</td><td>2022-09-06</td><td>2022-09-08</td><td>2022-09-21</td><td><span class="g">上柜</span></td><td>2023-02-21 23:01:25</td><td>35</td><td><span class="st"><i class="dot"></i>已结束</span></td><td></td></tr><tr><td><span class="cb"></span></td><td>8</td><td>立積</td><td>TWS:4968:STOCK</td><td>4968</td><td>112.50</td><td>105.00</td><td>145</td><td>5000</td><td>2022-09-06</td><td>2022-08-31</td><td>2022-09-02</td><td>2022-09-15</td><td><span class="p">上市</span></td><td>2023-02-21 23:01:25</td><td>1</td><td><span class="st"><i class="dot"></i>已结束</span></td><td></td></tr><tr><td><span class="cb"></span></td><td>7</td><td>碩禾</td><td>TWS:3691:STOCK</td><td>3691</td><td>99.50</td><td>115.00</td><td>1360</td><td>20</td><td>2022-09-08</td><td>2022-09-02</td><td>2022-09-06</td><td>2022-09-19</td><td><span class="g">上柜</span></td><td>2023-02-21 23:01:25</td><td>1</td><td><span class="st"><i class="dot"></i>已结束</span></td><td></td></tr><tr><td><span class="cb"></span></td><td>6</td><td>凱鈺</td><td>TWS:5468:STOCK</td><td>5468</td><td>21.20</td><td>10.00</td><td>680</td><td>0</td><td>2021-03-09</td><td>2021-03-03</td><td>2021-03-05</td><td>2021-03-17</td><td><span class="g">上柜</span></td><td>2023-02-21 23:01:25</td><td>1</td><td><span class="st"><i class="dot"></i>已结束</span></td><td></td></tr><tr><td><span class="cb"></span></td><td>9</td><td>動力-KY</td><td>TWS:6591:STOCK</td><td>6591</td><td>61.60</td><td>47.00</td><td>170</td><td>0</td><td>2020-09-30</td><td>2020-09-24</td><td>2020-09-28</td><td>2020-10-13</td><td><span class="p">上市</span></td><td>2023-02-21 23:01:25</td><td>1</td><td><span class="st"><i class="dot"></i>已结束</span></td><td></td></tr><tr><td><span class="cb"></span></td><td>10</td><td>伊雲谷</td><td>TWS:6689:STOCK</td><td>6689</td><td>82.50</td><td>112.00</td><td>1760</td><td>0</td><td>2022-09-06</td><td>2022-08-31</td><td>2022-09-02</td><td>2022-09-13</td><td><span class="p">上市</span></td><td>2023-02-21 23:01:25</td><td>1</td><td><span class="st"><i class="dot"></i>已结束</span></td><td></td></tr><tr><td><span class="cb"></span></td><td>11</td><td>材料-KY</td><td>TWS:4763:STOCK</td><td>4763</td><td>178.00</td><td>100.00</td><td>256</td><td>0</td><td>2022-09-05</td><td>2022-08-30</td><td>2022-09-01</td><td>2022-09-14</td><td><span class="p">上市</span></td><td>2023-02-21 23:01:25</td><td>1</td><td><span class="st"><i class="dot"></i>已结束</span></td><td></td></tr><tr><td><span class="cb"></span></td><td>12</td><td>信紘科</td><td>TWS:6667:STOCK</td><td>6667</td><td>67.10</td><td>47.00</td><td>357</td><td>0</td><td>2020-10-26</td><td>2020-10-20</td><td>2020-10-22</td><td>2020-11-03</td><td><span class="g">上柜</span></td><td>2023-02-21 23:01:25</td><td>1</td><td><span class="st"><i class="dot"></i>已结束</span></td><td></td></tr><tr><td><span class="cb"></span></td><td>13</td><td>奇鈦科</td><td>TWS:3430:STOCK</td><td>3430</td><td>42.45</td><td>42.00</td><td>776</td><td>0</td><td>2022-09-02</td><td>2022-08-29</td><td>2022-08-31</td><td>2022-09-08</td><td><span class="g">上柜</span></td><td>2023-02-21 23:01:25</td><td>1</td><td><span class="st"><i class="dot"></i>已结束</span></td><td></td></tr><tr><td><span class="cb"></span></td><td>14</td><td>正德</td><td>TWS:2641:STOCK</td><td>2641</td><td>26.50</td><td>28.00</td><td>3062</td><td>0</td><td>2021-07-27</td><td>2021-07-21</td><td>2021-07-23</td><td>2021-08-04</td><td><span class="g">上柜</span></td><td>2023-02-21 23:01:25</td><td>1</td><td><span class="st"><i class="dot"></i>已结束</span></td><td></td></tr></tbody></table>
  </div>
  <div class="fixcol"><div class="fh">操作</div><div class="fr odd"><span class="ob drag"><svg width="13" height="13" viewBox="0 0 13 13"><path fill="#fff" d="M6.5 0 L9.3 2.8 H7.7 V5.3 H10.2 V3.7 L13 6.5 L10.2 9.3 V7.7 H7.7 V10.2 H9.3 L6.5 13 L3.7 10.2 H5.3 V7.7 H2.8 V9.3 L0 6.5 L2.8 3.7 V5.3 H5.3 V2.8 H3.7 Z"/></svg></span><span class="ob ed"><svg width="12" height="12" viewBox="0 0 12 12"><path fill="#fff" d="M9 0.3 L11.7 3 L4 10.7 L0.3 11.7 L1.3 8 Z"/><path fill="#18bc9c" d="M7.6 1.7 L10.3 4.4 L10.8 3.9 L8.1 1.2 Z"/></svg></span><span class="ob del"><svg width="10" height="12" viewBox="0 0 10 12"><path fill="#fff" d="M0 2 H10 V3.2 H9.2 L8.6 12 H1.4 L0.8 3.2 H0 Z M3.3 0.2 H6.7 L7.2 2 H2.8 Z"/><path fill="#f75444" d="M3 4.2 H3.9 V10.6 H3 Z M4.6 4.2 H5.4 V10.6 H4.6 Z M6.1 4.2 H7 V10.6 H6.1 Z"/></svg></span></div><div class="fr"><span class="ob drag"><svg width="13" height="13" viewBox="0 0 13 13"><path fill="#fff" d="M6.5 0 L9.3 2.8 H7.7 V5.3 H10.2 V3.7 L13 6.5 L10.2 9.3 V7.7 H7.7 V10.2 H9.3 L6.5 13 L3.7 10.2 H5.3 V7.7 H2.8 V9.3 L0 6.5 L2.8 3.7 V5.3 H5.3 V2.8 H3.7 Z"/></svg></span><span class="ob ed"><svg width="12" height="12" viewBox="0 0 12 12"><path fill="#fff" d="M9 0.3 L11.7 3 L4 10.7 L0.3 11.7 L1.3 8 Z"/><path fill="#18bc9c" d="M7.6 1.7 L10.3 4.4 L10.8 3.9 L8.1 1.2 Z"/></svg></span><span class="ob del"><svg width="10" height="12" viewBox="0 0 10 12"><path fill="#fff" d="M0 2 H10 V3.2 H9.2 L8.6 12 H1.4 L0.8 3.2 H0 Z M3.3 0.2 H6.7 L7.2 2 H2.8 Z"/><path fill="#f75444" d="M3 4.2 H3.9 V10.6 H3 Z M4.6 4.2 H5.4 V10.6 H4.6 Z M6.1 4.2 H7 V10.6 H6.1 Z"/></svg></span></div><div class="fr odd"><span class="ob drag"><svg width="13" height="13" viewBox="0 0 13 13"><path fill="#fff" d="M6.5 0 L9.3 2.8 H7.7 V5.3 H10.2 V3.7 L13 6.5 L10.2 9.3 V7.7 H7.7 V10.2 H9.3 L6.5 13 L3.7 10.2 H5.3 V7.7 H2.8 V9.3 L0 6.5 L2.8 3.7 V5.3 H5.3 V2.8 H3.7 Z"/></svg></span><span class="ob ed"><svg width="12" height="12" viewBox="0 0 12 12"><path fill="#fff" d="M9 0.3 L11.7 3 L4 10.7 L0.3 11.7 L1.3 8 Z"/><path fill="#18bc9c" d="M7.6 1.7 L10.3 4.4 L10.8 3.9 L8.1 1.2 Z"/></svg></span><span class="ob del"><svg width="10" height="12" viewBox="0 0 10 12"><path fill="#fff" d="M0 2 H10 V3.2 H9.2 L8.6 12 H1.4 L0.8 3.2 H0 Z M3.3 0.2 H6.7 L7.2 2 H2.8 Z"/><path fill="#f75444" d="M3 4.2 H3.9 V10.6 H3 Z M4.6 4.2 H5.4 V10.6 H4.6 Z M6.1 4.2 H7 V10.6 H6.1 Z"/></svg></span></div><div class="fr"><span class="ob drag"><svg width="13" height="13" viewBox="0 0 13 13"><path fill="#fff" d="M6.5 0 L9.3 2.8 H7.7 V5.3 H10.2 V3.7 L13 6.5 L10.2 9.3 V7.7 H7.7 V10.2 H9.3 L6.5 13 L3.7 10.2 H5.3 V7.7 H2.8 V9.3 L0 6.5 L2.8 3.7 V5.3 H5.3 V2.8 H3.7 Z"/></svg></span><span class="ob ed"><svg width="12" height="12" viewBox="0 0 12 12"><path fill="#fff" d="M9 0.3 L11.7 3 L4 10.7 L0.3 11.7 L1.3 8 Z"/><path fill="#18bc9c" d="M7.6 1.7 L10.3 4.4 L10.8 3.9 L8.1 1.2 Z"/></svg></span><span class="ob del"><svg width="10" height="12" viewBox="0 0 10 12"><path fill="#fff" d="M0 2 H10 V3.2 H9.2 L8.6 12 H1.4 L0.8 3.2 H0 Z M3.3 0.2 H6.7 L7.2 2 H2.8 Z"/><path fill="#f75444" d="M3 4.2 H3.9 V10.6 H3 Z M4.6 4.2 H5.4 V10.6 H4.6 Z M6.1 4.2 H7 V10.6 H6.1 Z"/></svg></span></div><div class="fr odd"><span class="ob drag"><svg width="13" height="13" viewBox="0 0 13 13"><path fill="#fff" d="M6.5 0 L9.3 2.8 H7.7 V5.3 H10.2 V3.7 L13 6.5 L10.2 9.3 V7.7 H7.7 V10.2 H9.3 L6.5 13 L3.7 10.2 H5.3 V7.7 H2.8 V9.3 L0 6.5 L2.8 3.7 V5.3 H5.3 V2.8 H3.7 Z"/></svg></span><span class="ob ed"><svg width="12" height="12" viewBox="0 0 12 12"><path fill="#fff" d="M9 0.3 L11.7 3 L4 10.7 L0.3 11.7 L1.3 8 Z"/><path fill="#18bc9c" d="M7.6 1.7 L10.3 4.4 L10.8 3.9 L8.1 1.2 Z"/></svg></span><span class="ob del"><svg width="10" height="12" viewBox="0 0 10 12"><path fill="#fff" d="M0 2 H10 V3.2 H9.2 L8.6 12 H1.4 L0.8 3.2 H0 Z M3.3 0.2 H6.7 L7.2 2 H2.8 Z"/><path fill="#f75444" d="M3 4.2 H3.9 V10.6 H3 Z M4.6 4.2 H5.4 V10.6 H4.6 Z M6.1 4.2 H7 V10.6 H6.1 Z"/></svg></span></div><div class="fr"><span class="ob drag"><svg width="13" height="13" viewBox="0 0 13 13"><path fill="#fff" d="M6.5 0 L9.3 2.8 H7.7 V5.3 H10.2 V3.7 L13 6.5 L10.2 9.3 V7.7 H7.7 V10.2 H9.3 L6.5 13 L3.7 10.2 H5.3 V7.7 H2.8 V9.3 L0 6.5 L2.8 3.7 V5.3 H5.3 V2.8 H3.7 Z"/></svg></span><span class="ob ed"><svg width="12" height="12" viewBox="0 0 12 12"><path fill="#fff" d="M9 0.3 L11.7 3 L4 10.7 L0.3 11.7 L1.3 8 Z"/><path fill="#18bc9c" d="M7.6 1.7 L10.3 4.4 L10.8 3.9 L8.1 1.2 Z"/></svg></span><span class="ob del"><svg width="10" height="12" viewBox="0 0 10 12"><path fill="#fff" d="M0 2 H10 V3.2 H9.2 L8.6 12 H1.4 L0.8 3.2 H0 Z M3.3 0.2 H6.7 L7.2 2 H2.8 Z"/><path fill="#f75444" d="M3 4.2 H3.9 V10.6 H3 Z M4.6 4.2 H5.4 V10.6 H4.6 Z M6.1 4.2 H7 V10.6 H6.1 Z"/></svg></span></div><div class="fr odd"><span class="ob drag"><svg width="13" height="13" viewBox="0 0 13 13"><path fill="#fff" d="M6.5 0 L9.3 2.8 H7.7 V5.3 H10.2 V3.7 L13 6.5 L10.2 9.3 V7.7 H7.7 V10.2 H9.3 L6.5 13 L3.7 10.2 H5.3 V7.7 H2.8 V9.3 L0 6.5 L2.8 3.7 V5.3 H5.3 V2.8 H3.7 Z"/></svg></span><span class="ob ed"><svg width="12" height="12" viewBox="0 0 12 12"><path fill="#fff" d="M9 0.3 L11.7 3 L4 10.7 L0.3 11.7 L1.3 8 Z"/><path fill="#18bc9c" d="M7.6 1.7 L10.3 4.4 L10.8 3.9 L8.1 1.2 Z"/></svg></span><span class="ob del"><svg width="10" height="12" viewBox="0 0 10 12"><path fill="#fff" d="M0 2 H10 V3.2 H9.2 L8.6 12 H1.4 L0.8 3.2 H0 Z M3.3 0.2 H6.7 L7.2 2 H2.8 Z"/><path fill="#f75444" d="M3 4.2 H3.9 V10.6 H3 Z M4.6 4.2 H5.4 V10.6 H4.6 Z M6.1 4.2 H7 V10.6 H6.1 Z"/></svg></span></div><div class="fr"><span class="ob drag"><svg width="13" height="13" viewBox="0 0 13 13"><path fill="#fff" d="M6.5 0 L9.3 2.8 H7.7 V5.3 H10.2 V3.7 L13 6.5 L10.2 9.3 V7.7 H7.7 V10.2 H9.3 L6.5 13 L3.7 10.2 H5.3 V7.7 H2.8 V9.3 L0 6.5 L2.8 3.7 V5.3 H5.3 V2.8 H3.7 Z"/></svg></span><span class="ob ed"><svg width="12" height="12" viewBox="0 0 12 12"><path fill="#fff" d="M9 0.3 L11.7 3 L4 10.7 L0.3 11.7 L1.3 8 Z"/><path fill="#18bc9c" d="M7.6 1.7 L10.3 4.4 L10.8 3.9 L8.1 1.2 Z"/></svg></span><span class="ob del"><svg width="10" height="12" viewBox="0 0 10 12"><path fill="#fff" d="M0 2 H10 V3.2 H9.2 L8.6 12 H1.4 L0.8 3.2 H0 Z M3.3 0.2 H6.7 L7.2 2 H2.8 Z"/><path fill="#f75444" d="M3 4.2 H3.9 V10.6 H3 Z M4.6 4.2 H5.4 V10.6 H4.6 Z M6.1 4.2 H7 V10.6 H6.1 Z"/></svg></span></div><div class="fr odd"><span class="ob drag"><svg width="13" height="13" viewBox="0 0 13 13"><path fill="#fff" d="M6.5 0 L9.3 2.8 H7.7 V5.3 H10.2 V3.7 L13 6.5 L10.2 9.3 V7.7 H7.7 V10.2 H9.3 L6.5 13 L3.7 10.2 H5.3 V7.7 H2.8 V9.3 L0 6.5 L2.8 3.7 V5.3 H5.3 V2.8 H3.7 Z"/></svg></span><span class="ob ed"><svg width="12" height="12" viewBox="0 0 12 12"><path fill="#fff" d="M9 0.3 L11.7 3 L4 10.7 L0.3 11.7 L1.3 8 Z"/><path fill="#18bc9c" d="M7.6 1.7 L10.3 4.4 L10.8 3.9 L8.1 1.2 Z"/></svg></span><span class="ob del"><svg width="10" height="12" viewBox="0 0 10 12"><path fill="#fff" d="M0 2 H10 V3.2 H9.2 L8.6 12 H1.4 L0.8 3.2 H0 Z M3.3 0.2 H6.7 L7.2 2 H2.8 Z"/><path fill="#f75444" d="M3 4.2 H3.9 V10.6 H3 Z M4.6 4.2 H5.4 V10.6 H4.6 Z M6.1 4.2 H7 V10.6 H6.1 Z"/></svg></span></div><div class="fr"><span class="ob drag"><svg width="13" height="13" viewBox="0 0 13 13"><path fill="#fff" d="M6.5 0 L9.3 2.8 H7.7 V5.3 H10.2 V3.7 L13 6.5 L10.2 9.3 V7.7 H7.7 V10.2 H9.3 L6.5 13 L3.7 10.2 H5.3 V7.7 H2.8 V9.3 L0 6.5 L2.8 3.7 V5.3 H5.3 V2.8 H3.7 Z"/></svg></span><span class="ob ed"><svg width="12" height="12" viewBox="0 0 12 12"><path fill="#fff" d="M9 0.3 L11.7 3 L4 10.7 L0.3 11.7 L1.3 8 Z"/><path fill="#18bc9c" d="M7.6 1.7 L10.3 4.4 L10.8 3.9 L8.1 1.2 Z"/></svg></span><span class="ob del"><svg width="10" height="12" viewBox="0 0 10 12"><path fill="#fff" d="M0 2 H10 V3.2 H9.2 L8.6 12 H1.4 L0.8 3.2 H0 Z M3.3 0.2 H6.7 L7.2 2 H2.8 Z"/><path fill="#f75444" d="M3 4.2 H3.9 V10.6 H3 Z M4.6 4.2 H5.4 V10.6 H4.6 Z M6.1 4.2 H7 V10.6 H6.1 Z"/></svg></span></div></div>
  <div class="scroll"><div class="thumb"></div>
    <svg class="abs" style="left:6px;top:5px" width="5" height="8" viewBox="0 0 5 8"><path d="M5 0 V8 L0 4 Z" fill="#a3a3a3"/></svg>
    <svg class="abs" style="left:1620px;top:5px" width="5" height="8" viewBox="0 0 5 8"><path d="M0 0 V8 L5 4 Z" fill="#505050"/></svg>
  </div>
  <div class="pinfo">显示第 1 到第 10 条记录，总共 344 条记录 每页显示</div><div class="psel"><span class="abs" style="left:11px;top:6px;line-height:18px">10</span><span class="abs" style="left:30px;top:14px"><svg width="8" height="4" viewBox="0 0 8 4"><path d="M0 4 H8 L4 0 Z" fill="#333"/></svg></span></div><div class="abs" style="left:402px;top:672px;line-height:18px;white-space:nowrap">条记录</div><div class="pg" style="left:1158px;width:68px;border-radius:3px 0 0 3px;">上一页</div><div class="pg act" style="left:1225px;width:35px;">1</div><div class="pg" style="left:1259px;width:33px;">2</div><div class="pg" style="left:1291px;width:33px;">3</div><div class="pg" style="left:1323px;width:34px;">4</div><div class="pg" style="left:1356px;width:34px;">5</div><div class="pg" style="left:1389px;width:37px;">...</div><div class="pg" style="left:1425px;width:42px;">35</div><div class="pg" style="left:1466px;width:69px;border-radius:0 3px 3px 0;">下一页</div><div class="abs" style="left:1538px;top:664px;width:50px;height:34px;border:1px solid #ccd5df;background:#fff"></div><div class="abs" style="left:1593px;top:665px;width:52px;height:33px;border:1px solid #ddd;background:#f4f4f4;border-radius:3px;text-align:center;line-height:31px;color:#333">跳转</div>
</div>
<div class="abs" style="left:1673px;top:780px;width:167px;height:40px;background:#fff;border:1px solid #c8c8c8;border-radius:5px;box-shadow:0 3px 8px rgba(0,0,0,.13);line-height:38px;padding-left:15px;font-size:13px;color:#555;white-space:nowrap">WebSocket 链接已断开</div><svg class="abs" style="left:1839px;top:788px" width="12" height="24" viewBox="0 0 12 24"><path d="M0 1 L10.5 12 L0 23" fill="#fff" stroke="#c8c8c8" stroke-width="1"/><rect x="-1" y="1.5" width="1.5" height="21" fill="#fff"/></svg><div class="abs" style="left:1850px;top:775px"><svg width="50" height="50" viewBox="0 0 50 50"><defs><clipPath id="bub"><circle cx="25.3" cy="25" r="15.3"/></clipPath></defs><circle cx="25" cy="25" r="25" fill="#1683ff"/>
<circle cx="25.3" cy="25" r="15.3" fill="#fff"/><path d="M12 30 C11.5 34 10.5 36.5 9.6 38.6 C12 38.8 14.8 38.3 17.5 37.8 Z" fill="#fff"/>
<circle cx="41.5" cy="15.5" r="10.5" fill="#79b4ff" clip-path="url(#bub)"/></svg></div>
</body></html>
